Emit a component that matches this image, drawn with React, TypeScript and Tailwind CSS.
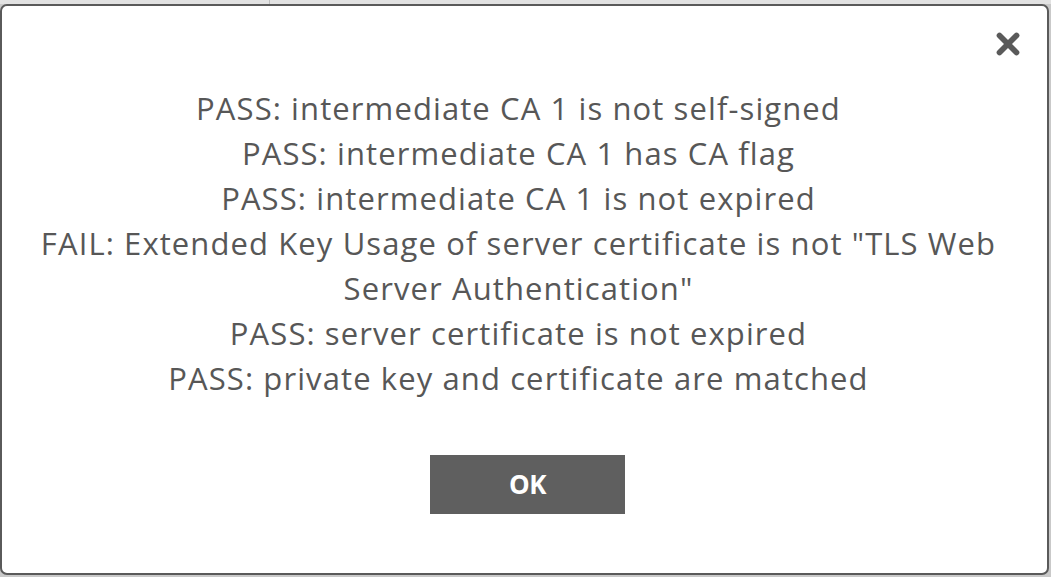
import { X } from "lucide-react";

const lines = [
  "PASS: intermediate CA 1 is not self-signed",
  "PASS: intermediate CA 1 has CA flag",
  "PASS: intermediate CA 1 is not expired",
  'FAIL: Extended Key Usage of server certificate is not "TLS Web Server Authentication"',
  "PASS: server certificate is not expired",
  "PASS: private key and certificate are matched",
];

export default function App() {
  return (
    <div className="w-[1051px] h-[577px] bg-[#c9c9c9] overflow-hidden flex flex-col font-['Open_Sans',sans-serif]">
      {/* top strip behind the dialog */}
      <div className="h-[4px] flex shrink-0">
        <div className="w-[270px] bg-[#e2e2e2] border-r border-[#bcbcbc]" />
        <div className="flex-1 bg-[#e2e2e2]" />
      </div>

      {/* dialog */}
      <div className="w-[1049px] h-[571px] bg-white border-2 border-[#5a5a5a] rounded-[7px] flex flex-col relative">
        <button className="absolute top-[21px] right-[22px] text-[#5a5a5a]" aria-label="Close">
          <X size={34} strokeWidth={4} />
        </button>

        <div className="pt-[80px] pl-[24px] pr-[36px] text-center text-[31px] tracking-[1.1px] leading-[45px] text-[#575757]">
          {lines.map((l) => (
            <p key={l}>{l}</p>
          ))}
        </div>

        <div className="flex justify-center pt-[54px] pl-[6px]">
          <button className="w-[195px] h-[59px] bg-[#5f5f5f] text-white text-[26px] font-bold tracking-[-0.5px]">
            OK
          </button>
        </div>
      </div>
    </div>
  );
}
